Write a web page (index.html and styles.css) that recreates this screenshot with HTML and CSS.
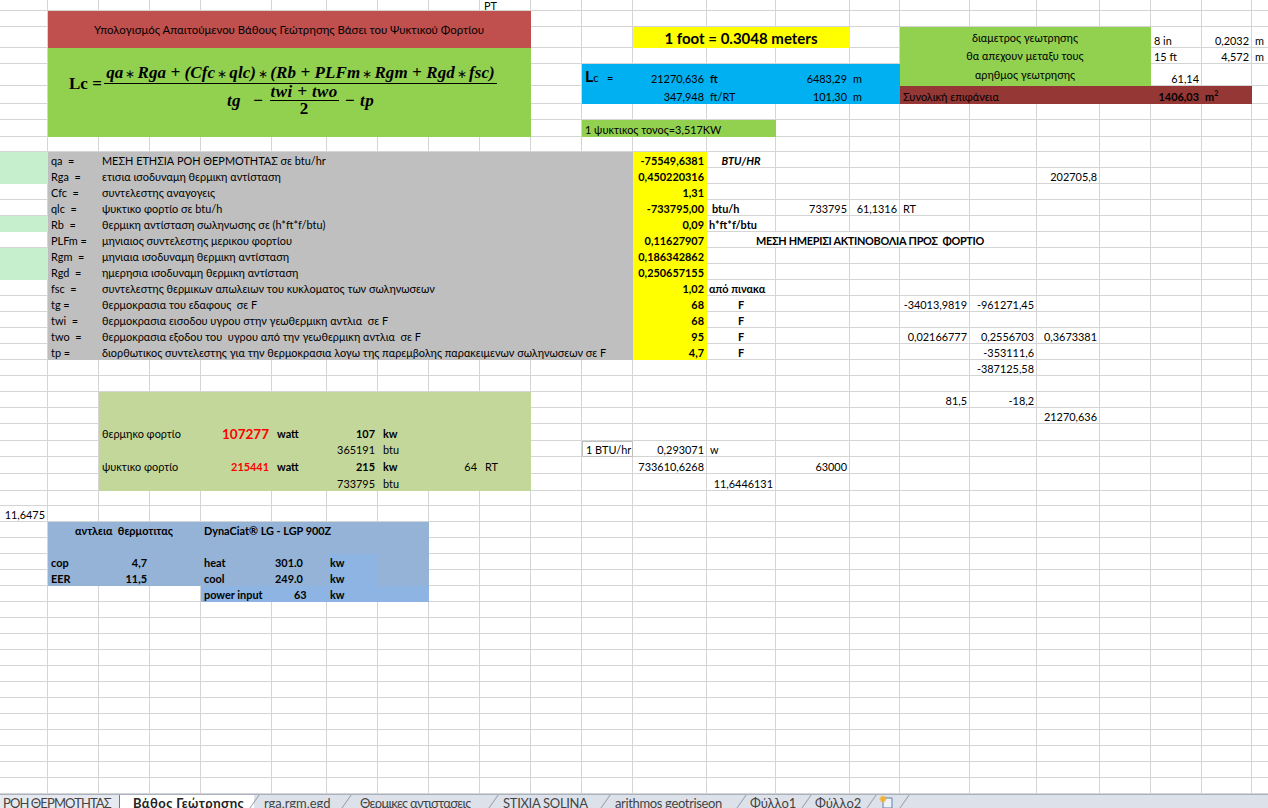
FILE: index.html
```html
<!DOCTYPE html>
<html lang="el">
<head>
<meta charset="utf-8">
<title>Βάθος Γεώτρησης</title>
<link rel="stylesheet" href="styles.css">
</head>
<body>
<main class="sheet">
<table class="grid">
<colgroup>
<col class="w48"><col class="w51"><col class="w51"><col class="w51"><col class="w71"><col class="w55"><col class="w51"><col class="w51"><col class="w51"><col class="w51"><col class="w51"><col class="w51"><col class="w74"><col class="w69"><col class="w74"><col class="w50"><col class="w70"><col class="w67"><col class="w63"><col class="w51"><col class="w51"><col class="w50"><col class="w51">
</colgroup>
<tbody>
<tr class="h11"><td></td><td></td><td></td><td></td><td></td><td></td><td></td><td></td><td></td><td class="tiny">PT</td><td></td><td></td><td></td><td></td><td></td><td></td><td></td><td></td><td></td><td></td><td></td><td></td><td></td></tr>
<tr><td></td><td class="red mid ctr banner" colspan="9" rowspan="2">Υπολογισμός Απαιτούμενου Βάθους Γεώτρησης Βάσει του Ψυκτικού Φορτίου</td><td></td><td></td><td></td><td></td><td></td><td></td><td></td><td></td><td></td><td></td><td></td><td></td><td></td></tr>
<tr class="h21"><td></td><td></td><td></td><td class="yel mid ctr foot" colspan="3">1 foot = 0.3048 meters</td><td></td><td class="lime mid ctr" colspan="4">διαμετρος γεωτρησης</td><td>8 in</td><td class="n">0,2032</td><td>m</td></tr>
<tr><td></td><td class="lime top" colspan="9" rowspan="5">
<div class="formula">
<div class="lhs">Lc =</div>
<div class="frac">
<div class="numer">qa<span class="op">∗</span>Rga + (Cfc<span class="op">∗</span>qlc)<span class="op">∗</span>(Rb + PLFm<span class="op">∗</span>Rgm + Rgd<span class="op">∗</span>fsc)</div>
<div class="denom"><span class="tg">tg</span><span>−</span><span class="sub"><span class="sub-top">twi + two</span><span class="sub-bot">2</span></span><span>− tp</span></div>
</div>
</div>
</td><td></td><td></td><td></td><td></td><td></td><td></td><td class="lime mid ctr" colspan="4">θα απεχουν μεταξυ τους</td><td>15 ft</td><td class="n">4,572</td><td>m</td></tr>
<tr class="h22"><td></td><td></td><td class="sky lc"><b class="lc-l">L</b>c&nbsp;&nbsp; =</td><td class="sky n">21270,636</td><td class="sky b">ft</td><td class="sky n">6483,29</td><td class="sky">m</td><td class="lime mid ctr" colspan="4">αρηθμος γεωτρησης</td><td class="n">61,14</td><td></td><td></td></tr>
<tr class="h18"><td></td><td></td><td class="sky"></td><td class="sky n">347,948</td><td class="sky">ft/RT</td><td class="sky n">101,30</td><td class="sky">m</td><td class="brn" colspan="4">Συνολική επιφάνεια</td><td class="brn n b">1406,03</td><td class="brn b">m<sup>2</sup></td><td></td></tr>
<tr><td></td><td></td><td></td><td></td><td></td><td></td><td></td><td></td><td></td><td></td><td></td><td></td><td></td><td></td></tr>
<tr class="h17"><td></td><td></td><td class="lime" colspan="3">1 ψυκτικος τονος=3,517KW</td><td></td><td></td><td></td><td></td><td></td><td></td><td></td><td></td><td></td></tr>
<tr class="h15"><td></td><td></td><td></td><td></td><td></td><td></td><td></td><td></td><td></td><td></td><td></td><td></td><td></td><td></td><td></td><td></td><td></td><td></td><td></td><td></td><td></td><td></td><td></td></tr>
<tr><td class="pale"></td><td class="gry">qa&nbsp; =</td><td class="gry" colspan="10">ΜΕΣΗ ΕΤΗΣΙΑ ΡΟΗ ΘΕΡΜΟΤΗΤΑΣ σε btu/hr</td><td class="yel n b">-75549,6381</td><td class="b i ctr">BTU/HR</td><td></td><td></td><td></td><td></td><td></td><td></td><td></td><td></td><td></td></tr>
<tr><td class="pale"></td><td class="gry">Rga&nbsp; =</td><td class="gry" colspan="10">ετισια ισοδυναμη θερμικη αντίσταση</td><td class="yel n b">0,450220316</td><td></td><td></td><td></td><td></td><td></td><td class="n">202705,8</td><td></td><td></td><td></td><td></td></tr>
<tr><td></td><td class="gry">Cfc&nbsp; =</td><td class="gry" colspan="10">συντελεστης αναγογεις</td><td class="yel n b">1,31</td><td></td><td></td><td></td><td></td><td></td><td></td><td></td><td></td><td></td><td></td></tr>
<tr><td></td><td class="gry">qlc&nbsp; =</td><td class="gry" colspan="10">ψυκτικο φορτίο σε btu/h</td><td class="yel n b">-733795,00</td><td class="b ind">btu/h</td><td class="n">733795</td><td class="n">61,1316</td><td>RT</td><td></td><td></td><td></td><td></td><td></td><td></td></tr>
<tr><td class="pale"></td><td class="gry">Rb&nbsp; =</td><td class="gry" colspan="10">θερμικη αντίσταση σωληνωσης σε (h*ft*f/btu)</td><td class="yel n b">0,09</td><td class="b tight">h*ft*f/btu</td><td></td><td></td><td></td><td></td><td></td><td></td><td></td><td></td><td></td></tr>
<tr><td></td><td class="gry">PLFm =</td><td class="gry" colspan="10">μηνιαιος συντελεστης μερικου φορτίου</td><td class="yel n b">0,11627907</td><td class="b ctr caps" colspan="5">ΜΕΣΗ ΗΜΕΡΙΣΙ ΑΚΤΙΝΟΒΟΛΙΑ ΠΡΟΣ&nbsp; ΦΟΡΤΙΟ</td><td></td><td></td><td></td><td></td><td></td></tr>
<tr><td class="pale"></td><td class="gry">Rgm&nbsp; =</td><td class="gry" colspan="10">μηνιαια ισοδυναμη θερμικη αντίσταση</td><td class="yel n b">0,186342862</td><td></td><td></td><td></td><td></td><td></td><td></td><td></td><td></td><td></td><td></td></tr>
<tr><td class="pale"></td><td class="gry">Rgd&nbsp; =</td><td class="gry" colspan="10">ημερησια ισοδυναμη θερμικη αντίσταση</td><td class="yel n b">0,250657155</td><td></td><td></td><td></td><td></td><td></td><td></td><td></td><td></td><td></td><td></td></tr>
<tr><td></td><td class="gry">fsc&nbsp; =</td><td class="gry" colspan="10">συντελεστης θερμικων απωλειων του κυκλοματος των σωληνωσεων</td><td class="yel n b">1,02</td><td class="b tight">από πινακα</td><td></td><td></td><td></td><td></td><td></td><td></td><td></td><td></td><td></td></tr>
<tr><td></td><td class="gry">tg =</td><td class="gry" colspan="10">θερμοκρασια του εδαφους&nbsp; σε F</td><td class="yel n b">68</td><td class="b ctr">F</td><td></td><td></td><td class="n">-34013,9819</td><td class="n">-961271,45</td><td></td><td></td><td></td><td></td><td></td></tr>
<tr><td></td><td class="gry">twi&nbsp; =</td><td class="gry" colspan="10">θερμοκρασια εισοδου υγρου στην γεωθερμικη αντλια&nbsp; σε F</td><td class="yel n b">68</td><td class="b ctr">F</td><td></td><td></td><td></td><td></td><td></td><td></td><td></td><td></td><td></td></tr>
<tr><td></td><td class="gry">two&nbsp; =</td><td class="gry" colspan="10">θερμοκρασια εξοδου του&nbsp; υγρου από την γεωθερμικη αντλια&nbsp; σε F</td><td class="yel n b">95</td><td class="b ctr">F</td><td></td><td></td><td class="n">0,02166777</td><td class="n">0,2556703</td><td class="n">0,3673381</td><td></td><td></td><td></td><td></td></tr>
<tr><td></td><td class="gry">tp =</td><td class="gry" colspan="10">διορθωτικος συντελεστης για την θερμοκρασια λογω της παρεμβολης παρακειμενων σωληνωσεων σε F</td><td class="yel n b">4,7</td><td class="b ctr">F</td><td></td><td></td><td></td><td class="n">-353111,6</td><td></td><td></td><td></td><td></td><td></td></tr>
<tr><td></td><td></td><td></td><td></td><td></td><td></td><td></td><td></td><td></td><td></td><td></td><td></td><td></td><td></td><td></td><td></td><td></td><td class="n">-387125,58</td><td></td><td></td><td></td><td></td><td></td></tr>
<tr><td></td><td></td><td></td><td></td><td></td><td></td><td></td><td></td><td></td><td></td><td></td><td></td><td></td><td></td><td></td><td></td><td></td><td></td><td></td><td></td><td></td><td></td><td></td></tr>
<tr><td></td><td></td><td class="oli" colspan="8"></td><td></td><td></td><td></td><td></td><td></td><td></td><td class="n">81,5</td><td class="n">-18,2</td><td></td><td></td><td></td><td></td><td></td></tr>
<tr><td></td><td></td><td class="oli" colspan="8"></td><td></td><td></td><td></td><td></td><td></td><td></td><td></td><td></td><td class="n">21270,636</td><td></td><td></td><td></td><td></td></tr>
<tr class="h17"><td></td><td></td><td class="oli" colspan="2">θερμηκο φορτίο</td><td class="oli n b hot big">107277</td><td class="oli b ind">watt</td><td class="oli n b">107</td><td class="oli b ind">kw</td><td class="oli"></td><td class="oli"></td><td></td><td></td><td></td><td></td><td></td><td></td><td></td><td></td><td></td><td></td><td></td><td></td><td></td></tr>
<tr><td></td><td></td><td class="oli" colspan="4"></td><td class="oli n">365191</td><td class="oli ind">btu</td><td class="oli"></td><td class="oli"></td><td></td><td class="box">1 BTU/hr</td><td class="n">0,293071</td><td>w</td><td></td><td></td><td></td><td></td><td></td><td></td><td></td><td></td><td></td></tr>
<tr class="h17"><td></td><td></td><td class="oli" colspan="2">ψυκτικο φορτίο</td><td class="oli n b hot">215441</td><td class="oli b ind">watt</td><td class="oli n b">215</td><td class="oli b ind">kw</td><td class="oli n">64</td><td class="oli ind">RT</td><td></td><td></td><td class="n">733610,6268</td><td></td><td class="n">63000</td><td></td><td></td><td></td><td></td><td></td><td></td><td></td><td></td></tr>
<tr class="h17"><td></td><td></td><td class="oli" colspan="4"></td><td class="oli n">733795</td><td class="oli ind">btu</td><td class="oli"></td><td class="oli"></td><td></td><td></td><td></td><td class="n">11,6446131</td><td></td><td></td><td></td><td></td><td></td><td></td><td></td><td></td><td></td></tr>
<tr class="h15"><td></td><td></td><td></td><td></td><td></td><td></td><td></td><td></td><td></td><td></td><td></td><td></td><td></td><td></td><td></td><td></td><td></td><td></td><td></td><td></td><td></td><td></td><td></td></tr>
<tr><td class="n">11,6475</td><td></td><td></td><td></td><td></td><td></td><td></td><td></td><td></td><td></td><td></td><td></td><td></td><td></td><td></td><td></td><td></td><td></td><td></td><td></td><td></td><td></td><td></td></tr>
<tr><td></td><td class="sb1 b ctr" colspan="3">αντλεια&nbsp; θερμοτιτας</td><td class="sb1 b" colspan="4">DynaCiat® LG - LGP 900Z</td><td></td><td></td><td></td><td></td><td></td><td></td><td></td><td></td><td></td><td></td><td></td><td></td><td></td><td></td><td></td></tr>
<tr><td></td><td class="sb1" colspan="3"></td><td class="sb1" colspan="4"></td><td></td><td></td><td></td><td></td><td></td><td></td><td></td><td></td><td></td><td></td><td></td><td></td><td></td><td></td><td></td></tr>
<tr><td></td><td class="sb1 b">cop</td><td class="sb1 n b">4,7</td><td class="sb1"></td><td class="sb1 b">heat</td><td class="sb1 b">301.0</td><td class="sb2 b">kw</td><td class="sb1"></td><td></td><td></td><td></td><td></td><td></td><td></td><td></td><td></td><td></td><td></td><td></td><td></td><td></td><td></td><td></td></tr>
<tr><td></td><td class="sb1 b">EER</td><td class="sb1 n b">11,5</td><td class="sb1"></td><td class="sb1 b">cool</td><td class="sb1 b">249.0</td><td class="sb2 b">kw</td><td class="sb1"></td><td></td><td></td><td></td><td></td><td></td><td></td><td></td><td></td><td></td><td></td><td></td><td></td><td></td><td></td><td></td></tr>
<tr><td></td><td></td><td></td><td></td><td class="sb2 b">power input</td><td class="sb2 b pwr">63</td><td class="sb2 b">kw</td><td class="sb2"></td><td></td><td></td><td></td><td></td><td></td><td></td><td></td><td></td><td></td><td></td><td></td><td></td><td></td><td></td><td></td></tr>
<tr><td></td><td></td><td></td><td></td><td></td><td></td><td></td><td></td><td></td><td></td><td></td><td></td><td></td><td></td><td></td><td></td><td></td><td></td><td></td><td></td><td></td><td></td><td></td></tr>
<tr><td></td><td></td><td></td><td></td><td></td><td></td><td></td><td></td><td></td><td></td><td></td><td></td><td></td><td></td><td></td><td></td><td></td><td></td><td></td><td></td><td></td><td></td><td></td></tr>
<tr><td></td><td></td><td></td><td></td><td></td><td></td><td></td><td></td><td></td><td></td><td></td><td></td><td></td><td></td><td></td><td></td><td></td><td></td><td></td><td></td><td></td><td></td><td></td></tr>
<tr><td></td><td></td><td></td><td></td><td></td><td></td><td></td><td></td><td></td><td></td><td></td><td></td><td></td><td></td><td></td><td></td><td></td><td></td><td></td><td></td><td></td><td></td><td></td></tr>
<tr><td></td><td></td><td></td><td></td><td></td><td></td><td></td><td></td><td></td><td></td><td></td><td></td><td></td><td></td><td></td><td></td><td></td><td></td><td></td><td></td><td></td><td></td><td></td></tr>
<tr><td></td><td></td><td></td><td></td><td></td><td></td><td></td><td></td><td></td><td></td><td></td><td></td><td></td><td></td><td></td><td></td><td></td><td></td><td></td><td></td><td></td><td></td><td></td></tr>
<tr><td></td><td></td><td></td><td></td><td></td><td></td><td></td><td></td><td></td><td></td><td></td><td></td><td></td><td></td><td></td><td></td><td></td><td></td><td></td><td></td><td></td><td></td><td></td></tr>
<tr><td></td><td></td><td></td><td></td><td></td><td></td><td></td><td></td><td></td><td></td><td></td><td></td><td></td><td></td><td></td><td></td><td></td><td></td><td></td><td></td><td></td><td></td><td></td></tr>
<tr><td></td><td></td><td></td><td></td><td></td><td></td><td></td><td></td><td></td><td></td><td></td><td></td><td></td><td></td><td></td><td></td><td></td><td></td><td></td><td></td><td></td><td></td><td></td></tr>
<tr><td></td><td></td><td></td><td></td><td></td><td></td><td></td><td></td><td></td><td></td><td></td><td></td><td></td><td></td><td></td><td></td><td></td><td></td><td></td><td></td><td></td><td></td><td></td></tr>
<tr><td></td><td></td><td></td><td></td><td></td><td></td><td></td><td></td><td></td><td></td><td></td><td></td><td></td><td></td><td></td><td></td><td></td><td></td><td></td><td></td><td></td><td></td><td></td></tr>
<tr><td></td><td></td><td></td><td></td><td></td><td></td><td></td><td></td><td></td><td></td><td></td><td></td><td></td><td></td><td></td><td></td><td></td><td></td><td></td><td></td><td></td><td></td><td></td></tr>
</tbody>
</table>
</main>
<nav class="tabs">
<span class="tab first">ΡΟΗ ΘΕΡΜΟΤΗΤΑΣ</span>
<span class="tab active">Βάθος Γεώτρησης</span>
<span class="tab t3">rga,rgm,egd</span>
<span class="tab t4">Θερμικες αντιστασεις</span>
<span class="tab t5">STIXIA SOLINA</span>
<span class="tab t6">arithmos geotriseon</span>
<span class="tab t7">Φύλλο1</span>
<span class="tab t8">Φύλλο2</span>
<span class="tab newtab"><svg class="newicon" viewBox="0 0 14 14" width="14" height="14"><path d="M4 3h9v10H4z" fill="#eef3fa" stroke="#5f7fa8"/><path d="M4 0l1 2 2-1-1 2 2 1-2 1 1 2-2-1-1 2-1-2-2 1 1-2-2-1 2-1-1-2 2 1z" fill="#f0b030"/></svg></span>
</nav>
</body>
</html>
```
FILE: styles.css
```css
* { box-sizing: border-box; }
html, body { margin: 0; padding: 0; height: 100%; }
body {
  width: 1268px;
  height: 808px;
  overflow: hidden;
  display: flex;
  flex-direction: column;
  font-family: "Lato", "Noto Sans", sans-serif;
  font-size: 10.9px;
  color: #000;
  background: #fff;
}
.sheet { height: 794px; overflow: hidden; flex: none; }
.grid {
  table-layout: fixed;
  width: 1303px;
  border-collapse: separate;
  border-spacing: 0;
}
.w48 { width: 48px; } .w50 { width: 50px; } .w51 { width: 51px; } .w55 { width: 55px; }
.w63 { width: 63px; } .w67 { width: 67px; } .w69 { width: 69px; } .w70 { width: 70px; }
.w71 { width: 71px; } .w74 { width: 74px; }

tr { height: 16px; }
.h11 { height: 11px; } .h15 { height: 15px; } .h17 { height: 17px; } .h18 { height: 18px; }
.h21 { height: 21px; } .h22 { height: 22px; }

td {
  padding: 0 3px;
  line-height: 12px;
  vertical-align: bottom;
  white-space: nowrap;
  overflow: visible;
  border-right: 1px solid #d4d4d4;
  border-bottom: 1px solid #d4d4d4;
}
.n { text-align: right; padding-right: 2px; }
.ctr { text-align: center; }
.b { font-weight: 700; }
.i { font-style: italic; }
.mid { vertical-align: middle; padding-top: 1px; }
.top { vertical-align: top; padding: 0; }
.ind { padding-left: 5px; }
.tight { padding-left: 2px; }
.tiny { line-height: 9px; padding-left: 4px; }
.caps { letter-spacing: -0.3px; padding-right: 6px; }

.red  { background: #c0504d; border-color: #c0504d; }
.lime { background: #92d050; border-color: #92d050; }
.yel  { background: #ffff00; border-color: #ffff00; }
.sky  { background: #00b0f0; border-color: #00b0f0; }
.brn  { background: #953735; border-color: #953735; }
.gry  { background: #bfbfbf; border-color: #bfbfbf; }
.pale { background: #c6efce; border-color: #c6efce; }
.oli  { background: #c4d79b; border-color: #c4d79b; }
.sb1  { background: #95b3d7; border-color: #95b3d7; }
.sb2  { background: #8db4e2; border-color: #8db4e2; }

.banner { font-size: 11.4px; }
.foot { font-size: 15px; font-weight: 700; }
.lc { line-height: 14px; }
.lc-l { font-size: 16px; }
sup { font-size: 7px; line-height: 0; }
.hot { color: #ff0000; }
.big { font-size: 13.5px; }
.box { border: 1px solid #c0c0c0; }
.pwr { padding-left: 22px; }

.formula {
  display: flex;
  align-items: flex-start;
  padding: 15px 0 0 21px;
  font-family: "Liberation Serif", serif;
  font-weight: 700;
  font-style: italic;
  font-size: 17px;
}
.lhs { font-style: normal; line-height: 41px; width: 35px; flex: none; }
.frac { width: 393px; flex: none; }
.numer {
  height: 21px;
  line-height: 19px;
  text-align: center;
  border-bottom: 1.5px solid #000;
  letter-spacing: 0.1px;
}
.op { font-family: "Liberation Serif", serif; font-style: normal; font-size: 12px; font-weight: 400; padding: 0 2px; }
.denom {
  display: flex;
  justify-content: center;
  align-items: center;
  gap: 6px;
  line-height: 16px;
  letter-spacing: 0.4px;
}
.tg { margin-right: 6px; }
.sub { display: flex; flex-direction: column; align-items: stretch; text-align: center; }
.sub-top { border-bottom: 1.5px solid #000; padding: 0 1px; }
.sub-bot { font-style: normal; }

.tabs {
  height: 14px;
  flex: none;
  display: flex;
  overflow: hidden;
  background: #dde2ea;
  border-top: 1px solid #a9b2bf;
  font-size: 13px;
  line-height: 17px;
  color: #444;
  white-space: nowrap;
}
.tab { flex: none; position: relative; }
.tab::after {
  content: "";
  position: absolute;
  top: -2px;
  right: 0;
  height: 20px;
  width: 1px;
  background: #8f99a8;
  transform: skewX(-35deg);
}
.first { padding-left: 3px; width: 120px; letter-spacing: -0.9px; background: #e6eaf0; }
.first::after { transform: none; background: #777; }
.active { width: 134px; padding-left: 13px; background: #fff; font-weight: 700; color: #222; letter-spacing: 0.4px; }
.t3 { width: 92px; padding-left: 10px; }
.t4 { width: 147px; padding-left: 14px; letter-spacing: -0.7px; }
.t5 { width: 112px; padding-left: 10px; letter-spacing: -0.3px; }
.t6 { width: 136px; padding-left: 10px; letter-spacing: -0.35px; }
.t7 { width: 65px; padding-left: 9px; }
.t8 { width: 65px; padding-left: 9px; }
.newtab { width: 33px; padding-left: 8px; }
.newicon { display: block; }
```
